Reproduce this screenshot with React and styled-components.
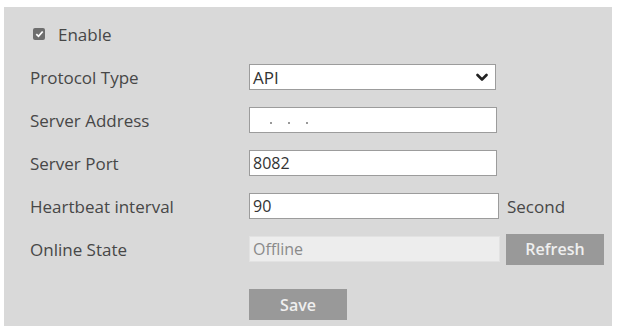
import React from "react";
import styled, { createGlobalStyle } from "styled-components";

const Global = createGlobalStyle`
  body {
    margin: 0;
    background: #ffffff;
    font-family: "Open Sans", "Liberation Sans", sans-serif;
  }
`;

const Panel = styled.div`
  margin: 7px 6px 0 4px;
  height: 319px;
  background: #d9d9d9;
  padding: 14px 0 0 26px;
  box-sizing: border-box;
`;

const Form = styled.div`
  display: grid;
  grid-template-columns: 219px auto;
  grid-auto-rows: 26px;
  row-gap: 17px;
  align-items: center;
`;

const CheckRow = styled.label`
  grid-column: 1 / span 2;
  display: flex;
  align-items: center;
  gap: 13px;
  padding-left: 3px;
  font-size: 17px;
  color: #474747;
`;

const Box = styled.span`
  width: 12px;
  height: 12px;
  border-radius: 2px;
  background: #6e6e6e;
  display: flex;
  align-items: center;
  justify-content: center;
`;

const Label = styled.span`
  font-size: 17px;
  color: #474747;
  white-space: nowrap;
`;

const Field = styled.div`
  display: flex;
  align-items: center;
  gap: ${({ gap }) => gap || "8px"};
`;

const Input = styled.div`
  width: ${({ w }) => w || "248px"};
  height: 26px;
  box-sizing: border-box;
  border: 1px solid ${({ disabled }) => (disabled ? "#e2e2e2" : "#9c9c9c")};
  background: ${({ disabled }) => (disabled ? "#ededed" : "#ffffff")};
  color: ${({ disabled }) => (disabled ? "#8a8a8a" : "#333333")};
  font-size: ${({ size }) => size || "16px"};
  padding: 0 3px;
  display: flex;
  align-items: center;
  justify-content: space-between;
`;

const Dots = styled.div`
  display: flex;
  gap: 16px;
  padding-left: 17px;
  padding-top: 6px;
  span {
    width: 2px;
    height: 2px;
    background: #777;
    border-radius: 50%;
  }
`;

const Unit = styled.span`
  font-size: 17px;
  color: #474747;
`;

const Button = styled.button`
  width: 98px;
  height: 31px;
  border: none;
  background: #999999;
  color: #efefef;
  font-family: inherit;
  font-size: 16px;
  font-weight: 600;
  padding: 0;
  margin-top: ${({ mt }) => mt || "0"};
`;

const Chevron = () => (
  <svg width="12" height="9" viewBox="0 0 12 9">
    <polyline
      points="1.5,2 6,6.5 10.5,2"
      fill="none"
      stroke="#222"
      strokeWidth="2.6"
      strokeLinecap="round"
      strokeLinejoin="round"
    />
  </svg>
);

export default function App() {
  return (
    <>
      <Global />
      <Panel>
        <Form>
          <CheckRow>
            <Box>
              <svg width="9" height="8" viewBox="0 0 9 8">
                <polyline
                  points="1.3,4.2 3.5,6.3 7.7,1.5"
                  fill="none"
                  stroke="#fff"
                  strokeWidth="1.8"
                />
              </svg>
            </Box>
            Enable
          </CheckRow>

          <Label>Protocol Type</Label>
          <Field>
            <Input w="247px" size="17px">
              API
              <span style={{ paddingRight: 4, display: "flex" }}>
                <Chevron />
              </span>
            </Input>
          </Field>

          <Label>Server Address</Label>
          <Field>
            <Input>
              <Dots>
                <span />
                <span />
                <span />
              </Dots>
            </Input>
          </Field>

          <Label>Server Port</Label>
          <Field>
            <Input>8082</Input>
          </Field>

          <Label>Heartbeat interval</Label>
          <Field>
            <Input w="250px">90</Input>
            <Unit>Second</Unit>
          </Field>

          <Label>Online State</Label>
          <Field gap="6px">
            <Input w="251px" disabled>
              Offline
            </Input>
            <Button>Refresh</Button>
          </Field>

          <span />
          <Field>
            <Button mt="25px">Save</Button>
          </Field>
        </Form>
      </Panel>
    </>
  );
}
